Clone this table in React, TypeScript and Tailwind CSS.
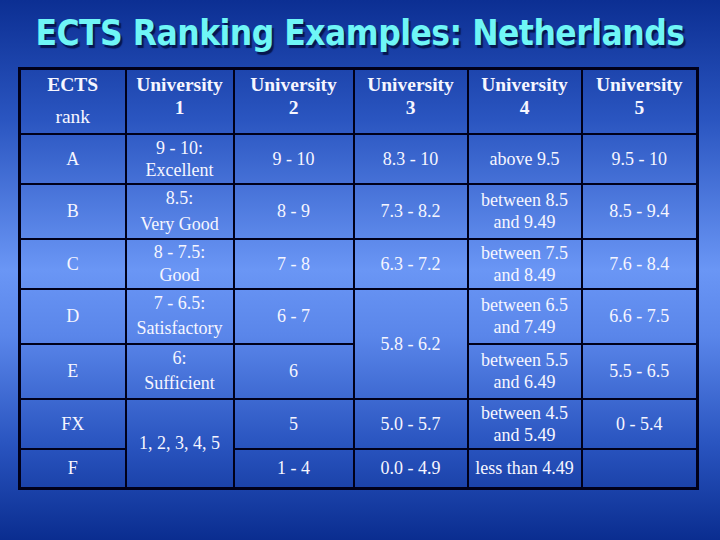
import * as React from "react";

// One table row: cells in order, some span two rows
type Cell = {
  text: string;
  rowSpan?: number;
  leading?: string;
};

type Row = {
  height: string;
  cells: Cell[];
};

const rows: Row[] = [
  {
    height: "h-[50px]",
    cells: [
      { text: "A" },
      { text: "9 - 10:\nExcellent" },
      { text: "9 - 10" },
      { text: "8.3 - 10" },
      { text: "above 9.5" },
      { text: "9.5 - 10" },
    ],
  },
  {
    height: "h-[55px]",
    cells: [
      { text: "B" },
      { text: "8.5:\nVery Good", leading: "leading-[26px]" },
      { text: "8 - 9" },
      { text: "7.3 - 8.2" },
      { text: "between 8.5\nand 9.49" },
      { text: "8.5 - 9.4" },
    ],
  },
  {
    height: "h-[50px]",
    cells: [
      { text: "C" },
      { text: "8 - 7.5:\nGood", leading: "leading-[23px]" },
      { text: "7 - 8" },
      { text: "6.3 - 7.2" },
      { text: "between 7.5\nand 8.49" },
      { text: "7.6 - 8.4" },
    ],
  },
  {
    height: "h-[55px]",
    cells: [
      { text: "D" },
      { text: "7 - 6.5:\nSatisfactory", leading: "leading-[25px]" },
      { text: "6 - 7" },
      { text: "5.8 - 6.2", rowSpan: 2 },
      { text: "between 6.5\nand 7.49" },
      { text: "6.6 - 7.5" },
    ],
  },
  {
    height: "h-[55px]",
    cells: [
      { text: "E" },
      { text: "6:\nSufficient", leading: "leading-[25px]" },
      { text: "6" },
      { text: "between 5.5\nand 6.49" },
      { text: "5.5 - 6.5" },
    ],
  },
  {
    height: "h-[50px]",
    cells: [
      { text: "FX" },
      { text: "1, 2, 3, 4, 5", rowSpan: 2 },
      { text: "5" },
      { text: "5.0 - 5.7" },
      { text: "between 4.5\nand 5.49" },
      { text: "0 - 5.4" },
    ],
  },
  {
    height: "h-[40px]",
    cells: [
      { text: "F" },
      { text: "1 - 4" },
      { text: "0.0 - 4.9" },
      { text: "less than 4.49" },
      { text: "" },
    ],
  },
];

const universities = ["1", "2", "3", "4", "5"];

const App: React.FC = () => {
  return (
    <div className="w-[720px] h-[540px] overflow-hidden bg-[linear-gradient(180deg,#0c2f93_0%,#2a55c0_22%,#6a96f5_50%,#5a86ea_62%,#2a55c0_82%,#0a2d90_100%)] font-['Liberation_Serif',serif] text-[#f6f6ff]">
      {/* Title */}
      <h1 className="h-[67px] pt-[13px] text-center font-['DejaVu_Sans_Condensed','DejaVu_Sans',sans-serif] text-[35px] font-bold leading-[40px] tracking-[-0.5px] text-[#6ff6f6] [text-shadow:2px_3px_1px_#061650]">
        ECTS Ranking Examples: Netherlands
      </h1>

      {/* Ranking table */}
      <table className="ml-[18px] w-[678px] table-fixed border-collapse border-[3px] border-[#00001a] text-center text-[18px]">
        <colgroup>
          <col className="w-[106px]" />
          <col className="w-[108px]" />
          <col className="w-[120px]" />
          <col className="w-[114px]" />
          <col className="w-[114px]" />
          <col className="w-[116px]" />
        </colgroup>
        <thead>
          <tr className="h-[65px]">
            <th className="border-2 border-[#00001a] align-top pt-[3px] text-[19.5px] leading-[23px]">
              <div className="font-bold">ECTS</div>
              <div className="mt-[9px] font-normal">rank</div>
            </th>
            {universities.map((u) => (
              <th
                key={u}
                className="border-2 border-[#00001a] align-top pt-[3px] text-[19.5px] font-bold leading-[23px]"
              >
                University
                <br />
                {u}
              </th>
            ))}
          </tr>
        </thead>
        <tbody>
          {rows.map((row, r) => (
            <tr key={r} className={row.height}>
              {row.cells.map((cell, c) => (
                <td
                  key={c}
                  rowSpan={cell.rowSpan}
                  className={`border-2 border-[#00001a] p-0 align-middle whitespace-pre-line ${cell.leading ?? "leading-[22px]"}`}
                >
                  {cell.text}
                </td>
              ))}
            </tr>
          ))}
        </tbody>
      </table>
    </div>
  );
};

export default App;
